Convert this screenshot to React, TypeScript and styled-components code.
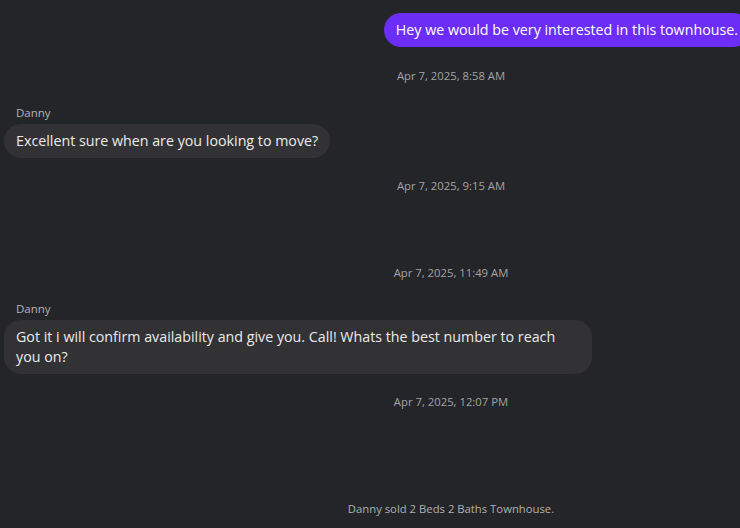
import React from "react";
import styled, { createGlobalStyle } from "styled-components";

const GlobalStyle = createGlobalStyle`
  html, body {
    margin: 0;
    padding: 0;
    background: #242528;
    overflow: hidden;
  }
  body {
    font-family: "Open Sans", "Noto Sans", "Liberation Sans", sans-serif;
  }
`;

type Item =
  | { kind: "out"; text: string; top: number }
  | { kind: "in"; text: string; author: string; top: number }
  | { kind: "time"; text: string; top: number }
  | { kind: "event"; text: string; top: number };

const items: Item[] = [
  { kind: "out", text: "Hey we would be very interested in this townhouse.", top: 13 },
  { kind: "time", text: "Apr 7, 2025, 8:58 AM", top: 21 },
  { kind: "in", author: "Danny", text: "Excellent sure when are you looking to move?", top: 21 },
  { kind: "time", text: "Apr 7, 2025, 9:15 AM", top: 20 },
  { kind: "time", text: "Apr 7, 2025, 11:49 AM", top: 71 },
  { kind: "in", author: "Danny", text: "Got it i will confirm availability and give you. Call! Whats the best number to reach you on?", top: 20 },
  { kind: "time", text: "Apr 7, 2025, 12:07 PM", top: 20 },
  { kind: "event", text: "Danny sold 2 Beds 2 Baths Townhouse.", top: 91 },
];

export default function App(): React.ReactElement {
  return (
    <>
      <GlobalStyle />
      <Thread>
        {items.map((item, i) => {
          if (item.kind === "out") {
            return (
              <OutRow key={i} $top={item.top}>
                <Bubble $mine>{item.text}</Bubble>
              </OutRow>
            );
          }
          if (item.kind === "in") {
            return (
              <InRow key={i} $top={item.top}>
                <Author>{item.author}</Author>
                <Bubble>{item.text}</Bubble>
              </InRow>
            );
          }
          if (item.kind === "time") {
            return (
              <Stamp key={i} $top={item.top}>
                {item.text}
              </Stamp>
            );
          }
          return (
            <Event key={i} $top={item.top}>
              {item.text}
            </Event>
          );
        })}
      </Thread>
    </>
  );
}

const Thread = styled.div`
  width: 902px;
  display: flex;
  flex-direction: column;
`;

const OutRow = styled.div<{ $top: number }>`
  width: 750px;
  margin-top: ${(p) => p.$top}px;
  display: flex;
  justify-content: flex-end;
`;

const InRow = styled.div<{ $top: number }>`
  width: 750px;
  margin-top: ${(p) => p.$top}px;
  padding-left: 4px;
  box-sizing: border-box;
  display: flex;
  flex-direction: column;
  align-items: flex-start;
`;

const Author = styled.div`
  font-size: 11.5px;
  line-height: 16px;
  color: #b4b4b6;
  padding-left: 12px;
  margin-bottom: 3px;
`;

const Bubble = styled.div<{ $mine?: boolean }>`
  max-width: 564px;
  padding: 7px 12px;
  border-radius: 17px;
  font-size: 14.25px;
  line-height: 20px;
  white-space: ${(p) => (p.$mine ? "nowrap" : "normal")};
  background: ${(p) => (p.$mine ? "#6c2ef7" : "#323235")};
  color: ${(p) => (p.$mine ? "#ffffff" : "#ebebec")};
`;

const Stamp = styled.div<{ $top: number }>`
  margin-top: ${(p) => p.$top}px;
  text-align: center;
  font-size: 11.3px;
  line-height: 16px;
  color: #a3a3a6;
`;

const Event = styled(Stamp)`
  color: #b0b0b3;
`;
